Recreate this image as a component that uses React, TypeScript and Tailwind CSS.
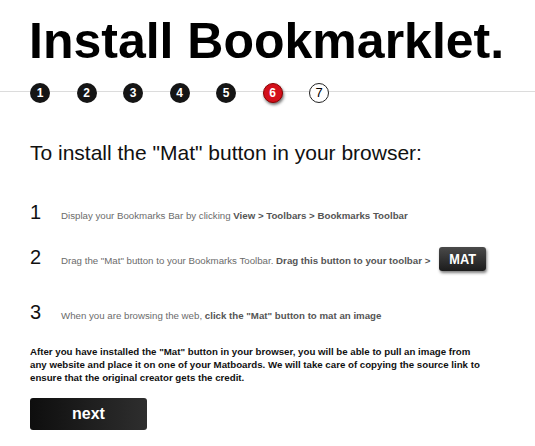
import React from 'react'

const steps = [1, 2, 3, 4, 5, 6, 7]
const current = 6

function StepDot({ n }: { n: number }) {
  if (n === current) {
    return (
      <div className="flex h-[20px] w-[20px] items-center justify-center rounded-full border border-[#8a0000] bg-[#d3101b] text-[12px] font-bold text-white shadow-[1px_2px_3px_rgba(0,0,0,0.55)]">
        {n}
      </div>
    )
  }
  if (n > current) {
    return (
      <div className="flex h-[20px] w-[20px] items-center justify-center rounded-full border border-[#222] bg-white text-[13px] text-black">
        {n}
      </div>
    )
  }
  return (
    <div className="flex h-[20px] w-[20px] items-center justify-center rounded-full bg-[#151515] text-[12px] font-bold text-white">
      {n}
    </div>
  )
}

function StepRow({ num, className, children }: { num: number; className: string; children: React.ReactNode }) {
  return (
    <div className={`flex items-baseline ${className}`}>
      <div className="w-[31px] shrink-0 text-[20px] leading-[20px] text-[#111]">{num}</div>
      <div className="whitespace-nowrap text-[9.7px] text-[#6b6b6b]">{children}</div>
    </div>
  )
}

export default function App() {
  return (
    <div className="h-[446px] w-[535px] overflow-hidden bg-white font-['Liberation_Sans',Arial,sans-serif]">
      {/* Title */}
      <h1 className="pl-[29px] pt-[16px] text-[50px] font-bold leading-[50px] text-black">
        Install Bookmarklet.
      </h1>

      {/* Progress */}
      <div className="mt-[25px] h-px bg-[#dcdcdc]" />
      <div className="-mt-[9px] flex gap-[26.5px] pl-[30px]">
        {steps.map(n => (
          <StepDot key={n} n={n} />
        ))}
      </div>

      <div className="px-[30px]">
        <h2 className="mt-[39px] text-[21px] leading-[22px] text-[#111]">
          To install the "Mat" button in your browser:
        </h2>

        <StepRow num={1} className="mt-[38px]">
          Display your Bookmarks Bar by clicking{' '}
          <b className="text-[#555]">View &gt; Toolbars &gt; Bookmarks Toolbar</b>
        </StepRow>

        <StepRow num={2} className="mt-[23px]">
          Drag the "Mat" button to your Bookmarks Toolbar.{' '}
          <b className="text-[#555]">Drag this button to your toolbar &gt;</b>
          <span className="ml-[9px] inline-flex h-[24px] w-[47px] items-center justify-center rounded-[3px] bg-[linear-gradient(to_bottom,#4a4a4a,#1c1c1c)] align-baseline text-[15px] font-bold text-white shadow-[1px_2px_3px_rgba(0,0,0,0.5)]">
            <span className="inline-block scale-x-[0.85]">MAT</span>
          </span>
        </StepRow>

        <StepRow num={3} className="mt-[31px]">
          When you are browsing the web,{' '}
          <b className="text-[#555]">click the "Mat" button to mat an image</b>
        </StepRow>

        <p className="mt-[22px] w-[450px] text-[9.7px] font-bold leading-[13px] text-[#111]">
          After you have installed the "Mat" button in your browser, you will be able to pull an image from any
          website and place it on one of your Matboards. We will take care of copying the source link to ensure that
          the original creator gets the credit.
        </p>

        <button className="mt-[14px] flex h-[32px] w-[117px] items-center justify-center rounded-[3px] bg-[linear-gradient(to_right,#0e0e0e,#2e2e2e)] text-[16px] font-bold text-white">
          next
        </button>
      </div>
    </div>
  )
}
